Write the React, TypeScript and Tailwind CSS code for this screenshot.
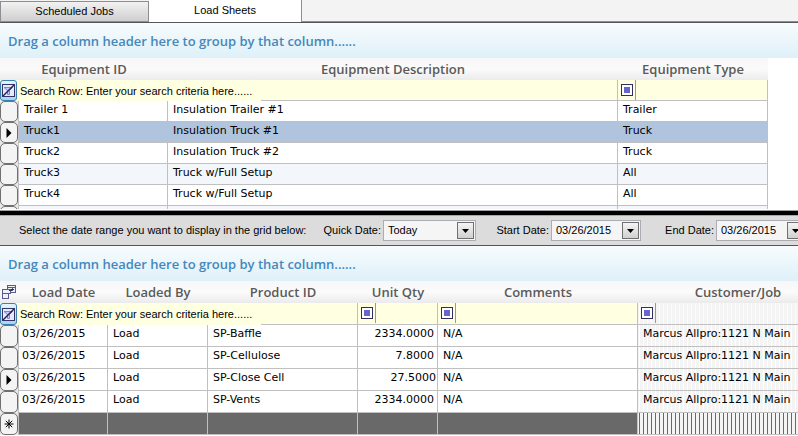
import type { ReactNode } from "react";
import clsx from "clsx";

const EQUIPMENT = [
  { id: "Trailer 1", description: "Insulation Trailer #1", type: "Trailer" },
  { id: "Truck1", description: "Insulation Truck #1", type: "Truck", selected: true },
  { id: "Truck2", description: "Insulation Truck #2", type: "Truck" },
  { id: "Truck3", description: "Truck w/Full Setup", type: "All", shaded: true },
  { id: "Truck4", description: "Truck w/Full Setup", type: "All" },
  { id: "", description: "", type: "", shaded: true },
];

const LOADS = [
  { product: "SP-Baffle", qty: "2334.0000" },
  { product: "SP-Cellulose", qty: "7.8000" },
  { product: "SP-Close Cell", qty: "27.5000", current: true },
  { product: "SP-Vents", qty: "2334.0000" },
];

const STRIPES =
  "bg-[repeating-linear-gradient(90deg,#f4f4f4_0,#f4f4f4_1px,transparent_1px,transparent_2px,#f4f4f4_2px,#f4f4f4_4px)]";
const HEAD = "bg-linear-to-b from-[#f7f7f7] via-[#fbfbfb] to-[#ebebeb] p-0";
const HEAD_TEXT =
  "h-[22px] text-center font-['Open_Sans',sans-serif] text-[13px] leading-[22px] font-semibold text-[#5a5a5a]";
const CELL = "border-r border-b border-[#c0c0c0] py-0 align-top leading-[18px] whitespace-nowrap";
const TABLE =
  "table-fixed border-separate border-spacing-0 font-['DejaVu_Sans',Verdana,sans-serif] text-[11px] text-black";

function GroupBar() {
  return (
    <div className="h-[35px] bg-linear-to-b from-[#f7fcfd] to-[#dff0f9] pl-2 font-['Open_Sans',sans-serif] text-[13px] leading-9 font-semibold text-[#4488bb]">
      Drag a column header here to group by that column......
    </div>
  );
}

function RowSelector({ label, tall, children }: { label: string; tall?: boolean; children?: ReactNode }) {
  return (
    <td className="border-r border-[#c0c0c0] bg-[#e8e8e8] p-0">
      <button
        type="button"
        aria-label={label}
        className={clsx(
          "flex w-full items-center justify-center rounded-[5px] border border-[#707070] bg-[#f4f4f4]",
          tall ? "h-[22px]" : "h-[21px]",
        )}
      >
        {children}
      </button>
    </td>
  );
}

function CurrentMark() {
  return (
    <svg width="6" height="10" viewBox="0 0 6 10">
      <path d="M0.5 0L5.5 5L0.5 10Z" fill="#000" />
    </svg>
  );
}

function NewRowMark() {
  return (
    <svg width="10" height="10" viewBox="0 0 10 10" stroke="#000" strokeWidth="1">
      <path d="M5 0.5V9.5M0.5 5H9.5M1.8 1.8L8.2 8.2M8.2 1.8L1.8 8.2" />
    </svg>
  );
}

function FilterCell({ tall }: { tall?: boolean }) {
  return (
    <td className="bg-[#ffffe1] p-0">
      <button
        type="button"
        aria-label="Clear filters"
        className={clsx(
          "flex w-[17px] items-center justify-center rounded-[3px] border border-[#3c7fb1] bg-linear-to-b from-[#e3f4fc] to-[#a4d5f0]",
          tall ? "h-[22px]" : "h-[21px]",
        )}
      >
        <svg width="13" height="13" viewBox="0 0 13 13" fill="none">
          <rect x="0.5" y="0.5" width="12" height="12" fill="#e6eafb" stroke="#35356b" />
          <path d="M2 3.5H10.5L7.5 6.5V10.5H5.5V6.5Z" fill="#c5cbf4" stroke="#7f84c4" />
          <path d="M1 12L12 1" stroke="#24245c" strokeWidth="1.4" />
        </svg>
      </button>
    </td>
  );
}

function SearchCell({ colSpan, tall }: { colSpan: number; tall?: boolean }) {
  return (
    <td colSpan={colSpan} className="border-r border-b border-[#c0c0c0] bg-[#ffffe1] p-0 align-top">
      <input
        type="text"
        aria-label="Search row"
        defaultValue="Search Row: Enter your search criteria here......"
        className={clsx(
          "-mb-px block w-[242px] bg-[#ffffe1] pl-px font-['Liberation_Sans',Arial,sans-serif] text-[11px] outline-none",
          tall ? "h-[22px]" : "h-[21px]",
        )}
      />
    </td>
  );
}

function OperatorCell({ striped }: { striped?: boolean }) {
  return (
    <td
      className={clsx(
        "border-r border-b border-[#c0c0c0] bg-[#ffffe1] p-0 align-top",
        striped && STRIPES,
      )}
    >
      <div className="flex h-5 w-[18px] items-center border-r border-[#999999] pl-[3px]">
        <button
          type="button"
          aria-label="Filter operator"
          className="flex size-3 items-center justify-center border border-[#303060] bg-white"
        >
          <span className="size-[6px] bg-[#6666cc]" />
        </button>
      </div>
    </td>
  );
}

function DropDown({ id, label, value, wide }: { id: string; label: string; value: string; wide?: boolean }) {
  return (
    <div className="flex shrink-0 items-center">
      <label htmlFor={id} className="w-[75px] pr-[2px] text-right whitespace-nowrap">
        {label}
      </label>
      <div className={clsx("relative h-[21px]", wide ? "w-[93px]" : "w-[90px]")}>
        <select
          id={id}
          defaultValue={value}
          className="block h-full w-full appearance-none border border-[#abadb3] bg-[#f5f5f5] pl-1 outline-none"
        >
          <option>{value}</option>
        </select>
        <span className="pointer-events-none absolute top-[2px] right-[2px] flex size-[17px] items-center justify-center border border-[#707070] bg-linear-to-b from-[#f4f4f4] to-[#d0d0d0]">
          <svg width="7" height="4" viewBox="0 0 7 4">
            <path d="M0 0H7L3.5 4Z" fill="#000" />
          </svg>
        </span>
      </div>
    </div>
  );
}

function EquipmentGrid() {
  return (
    <div className="h-[151px] overflow-hidden">
      <table className={clsx(TABLE, "w-[768px]")}>
        <colgroup>
          <col className="w-[19px]" />
          <col className="w-[149px]" />
          <col />
          <col className="w-[150px]" />
        </colgroup>
        <thead>
          <tr>
            <th colSpan={2} className={clsx(HEAD, HEAD_TEXT)}>Equipment ID</th>
            <th className={clsx(HEAD, HEAD_TEXT)}>Equipment Description</th>
            <th className={clsx(HEAD, HEAD_TEXT)}>Equipment Type</th>
          </tr>
        </thead>
        <tbody>
          <tr className="h-[21px]">
            <FilterCell />
            <SearchCell colSpan={2} />
            <OperatorCell />
          </tr>
          {EQUIPMENT.map((row, i) => (
            <tr
              key={i}
              className={clsx("h-[21px]", row.selected && "bg-[#b0c4de]", row.shaded && "bg-[#f3f7fc]")}
            >
              <RowSelector label={`Select row ${i + 1}`}>{row.selected && <CurrentMark />}</RowSelector>
              <td className={clsx(CELL, "pl-[5px]")}>{row.id}</td>
              <td className={clsx(CELL, "pl-[5px]")}>{row.description}</td>
              <td className={clsx(CELL, "pl-[5px]")}>{row.type}</td>
            </tr>
          ))}
        </tbody>
      </table>
    </div>
  );
}

function LoadGrid() {
  return (
    <div className="overflow-hidden">
      <table className={clsx(TABLE, "w-[838px]")}>
        <colgroup>
          <col className="w-[19px]" />
          <col className="w-[89px]" />
          <col className="w-[100px]" />
          <col className="w-[150px]" />
          <col className="w-[80px]" />
          <col className="w-[200px]" />
          <col />
        </colgroup>
        <thead>
          <tr>
            <th className={HEAD}>
              <button type="button" aria-label="Choose columns" className="flex h-[22px] w-full items-center pl-[2px]">
                <svg width="14" height="14" viewBox="0 0 14 14" fill="#eef0fa" stroke="#5a5a8c">
                  <rect x="5.5" y="0.5" width="8" height="7" />
                  <path d="M5.5 2.5H13.5" />
                  <rect x="0.5" y="4.5" width="8" height="4" />
                  <rect x="0.5" y="8.5" width="6" height="5" />
                  <path d="M7 5.5H10.5V3.5M9 5L10.5 3.5L12 5" fill="none" stroke="#303060" />
                </svg>
              </button>
            </th>
            {["Load Date", "Loaded By", "Product ID", "Unit Qty", "Comments", "Customer/Job"].map((name) => (
              <th key={name} className={clsx(HEAD, HEAD_TEXT)}>{name}</th>
            ))}
          </tr>
        </thead>
        <tbody>
          <tr className="h-[22px]">
            <FilterCell tall />
            <SearchCell colSpan={3} tall />
            <OperatorCell />
            <OperatorCell />
            <OperatorCell striped />
          </tr>
          {LOADS.map((row, i) => (
            <tr key={row.product} className="h-[22px]">
              <RowSelector label={`Select load ${i + 1}`} tall>{row.current && <CurrentMark />}</RowSelector>
              <td className={clsx(CELL, "pl-[3px]")}>03/26/2015</td>
              <td className={clsx(CELL, "pl-[5px]")}>Load</td>
              <td className={clsx(CELL, "pl-[5px]")}>{row.product}</td>
              <td className={clsx(CELL, "text-right", row.current ? "pr-px" : "pr-[3px]")}>{row.qty}</td>
              <td className={clsx(CELL, "pl-[5px]")}>N/A</td>
              <td className={clsx(CELL, STRIPES, "pl-[5px]")}>Marcus Allpro:1121 N Main</td>
            </tr>
          ))}
          <tr className="h-[22px]">
            <RowSelector label="Add load" tall>
              <NewRowMark />
            </RowSelector>
            {[0, 1, 2, 3, 4].map((n) => (
              <td key={n} className={clsx(CELL, "bg-[#696969]")} />
            ))}
            <td className={clsx(CELL, "bg-[#696969]", STRIPES)} />
          </tr>
        </tbody>
      </table>
    </div>
  );
}

export default function App() {
  return (
    <main className="w-full overflow-hidden bg-white font-['Liberation_Sans',Arial,sans-serif] text-[11px] text-black">
      <div role="tablist" className="flex h-[23px] items-end border-b border-[#55555a] bg-[#f3f3f3]">
        <button
          type="button"
          role="tab"
          aria-selected="false"
          className="h-[21px] w-[149px] border border-[#8c8e94] bg-linear-to-b from-[#f2f2f2] to-[#cfcfcf]"
        >
          Scheduled Jobs
        </button>
        <button
          type="button"
          role="tab"
          aria-selected="true"
          className="h-[22px] w-[153px] border-r border-[#8c8e94] bg-white pb-[2px]"
        >
          Load Sheets
        </button>
        <div className="h-full flex-1 border-b border-[#8c8e94]" />
      </div>

      <GroupBar />
      <EquipmentGrid />

      <div className="mt-px h-[5px] border-t border-[#a0a0a0] bg-black" />
      <div className="flex h-[31px] items-center border-t border-b border-t-[#a8a8a8] border-b-[#55555a] bg-[#dcdcdc]">
        <span className="w-[308px] shrink-0 pl-[19px] whitespace-nowrap">
          Select the date range you want to display in the grid below:
        </span>
        <DropDown id="quick-date" label="Quick Date:" value="Today" wide />
        <DropDown id="start-date" label="Start Date:" value="03/26/2015" />
        <DropDown id="end-date" label="End Date:" value="03/26/2015" />
      </div>

      <GroupBar />
      <LoadGrid />
    </main>
  );
}
